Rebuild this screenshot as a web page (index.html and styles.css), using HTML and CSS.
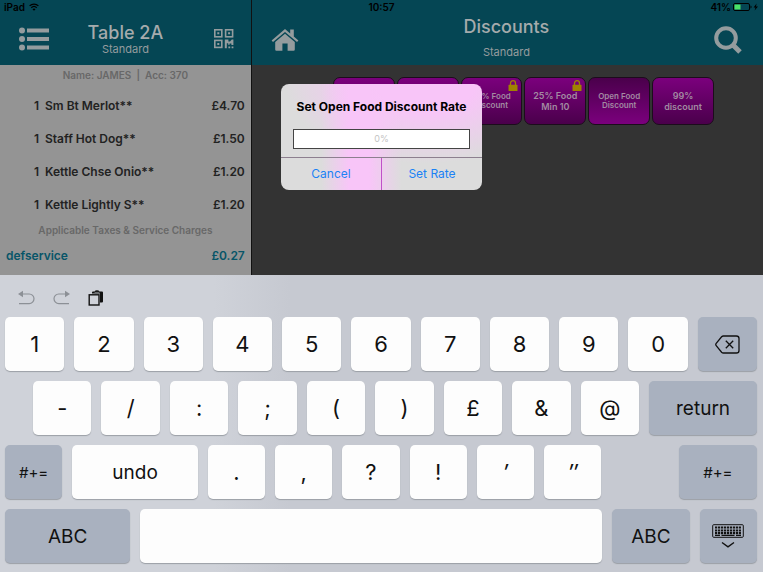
FILE: index.html
```html
<!DOCTYPE html>
<html lang="en">
<head>
  <meta charset="UTF-8">
  <meta name="viewport" content="width=device-width, initial-scale=1">
  <title>Discounts</title>
  <link rel="stylesheet" href="styles.css">
</head>
<body>

<svg class="defs" aria-hidden="true">
  <symbol id="lock" viewBox="0 0 10 11">
    <path d="M2.5 5V3.2a2.5 2.5 0 0 1 5 0V5" fill="none" stroke="currentColor" stroke-width="1.3"/>
    <rect x="0.5" y="4.8" width="9" height="6.2" rx="0.6" fill="currentColor"/>
  </symbol>
</svg>

<div class="app">
  <div class="status">
    <span class="status-left">iPad
      <svg width="10" height="8" viewBox="0 0 10 8" fill="none" stroke="#000" stroke-width="1.3">
        <path d="M0.6 2.9a6.2 6.2 0 0 1 8.8 0M2.3 4.7a3.9 3.9 0 0 1 5.4 0"/>
        <path d="M5 7.8L3.5 6.2a2.2 2.2 0 0 1 3 0z" fill="#000" stroke="none"/>
      </svg>
    </span>
    <span>10:57</span>
    <span class="status-right">41%
      <svg width="26" height="8" viewBox="0 0 26 8">
        <rect x="0.5" y="0.5" width="16" height="7" rx="1.5" fill="none" stroke="#000"/>
        <rect x="1.5" y="1.5" width="6" height="5" fill="#4be265"/>
        <path d="M17.5 2.5a1.6 1.6 0 0 1 0 3z"/>
        <path d="M23.6 0.5L20.6 4.4h1.9L21.6 7.5 25 3.5h-2z"/>
      </svg>
    </span>
  </div>

  <div class="sidebar">
    <div class="header">
      <button class="icon-btn" aria-label="Menu">
        <svg width="30" height="24" viewBox="0 0 30 24" fill="currentColor">
          <circle cx="3" cy="3.5" r="3"/><circle cx="3" cy="12" r="3"/><circle cx="3" cy="20.5" r="3"/>
          <rect x="8" y="1.5" width="22" height="4"/><rect x="8" y="10" width="22" height="4"/><rect x="8" y="18.5" width="22" height="4"/>
        </svg>
      </button>
      <div class="titles">
        <h1>Table 2A</h1>
        <p>Standard</p>
      </div>
      <button class="icon-btn" aria-label="QR code">
        <svg width="20" height="20" viewBox="0 0 20 20">
          <g fill="none" stroke="currentColor" stroke-width="1.6">
            <rect x="0.8" y="0.8" width="7" height="7"/><rect x="11.6" y="0.8" width="7" height="7"/><rect x="0.8" y="11.4" width="7" height="7"/>
          </g>
          <path fill="currentColor" d="M3.3 3.3h2v2h-2zM14.1 3.3h2v2h-2zM3.3 13.9h2v2h-2zM10.8 10.6h3.6v2h1.6l1.8-2h1.6v5.4h-2v-1.6h-1.8v1.4h-1.4v-1.6h-1.4v5h-2zM14.4 17.6h1.8v1.6h-1.8zM17.6 17.6h1.8v1.6h-1.8z"/>
        </svg>
      </button>
    </div>
    <p class="customer">Name: JAMES&nbsp; |&nbsp; Acc: 370</p>
    <table class="bill">
      <tr><td class="qty">1</td><td>Sm Bt Merlot**</td><td class="price">£4.70</td></tr>
      <tr><td class="qty">1</td><td>Staff Hot Dog**</td><td class="price">£1.50</td></tr>
      <tr><td class="qty">1</td><td>Kettle Chse Onio**</td><td class="price">£1.20</td></tr>
      <tr><td class="qty">1</td><td>Kettle Lightly S**</td><td class="price">£1.20</td></tr>
      <tr class="taxes"><td colspan="3">Applicable Taxes &amp; Service Charges</td></tr>
      <tr class="service"><td colspan="2">defservice</td><td class="price">£0.27</td></tr>
    </table>
  </div>

  <div class="main">
    <div class="header">
      <button class="icon-btn" aria-label="Home">
        <svg width="28" height="24" viewBox="0 0 28 24" fill="currentColor">
          <path d="M14 1L0.6 12.4l1.4 1.7L14 3.9l12 10.2 1.4-1.7-4.6-3.9V1.4h-3.6v4z"/>
          <path d="M14 5.8L4.2 14v7.6q0 1.2 1.2 1.2h6V15.6h5.2v7.2h6q1.2 0 1.2-1.2V14z"/>
        </svg>
      </button>
      <div class="titles wide">
        <h1>Discounts</h1>
        <p>Standard</p>
      </div>
      <button class="icon-btn" aria-label="Search">
        <svg width="28" height="28" viewBox="0 0 28 28" fill="none" stroke="currentColor">
          <circle cx="12" cy="12" r="9.8" stroke-width="4"/>
          <path d="M19 19l7 7" stroke-width="5"/>
        </svg>
      </button>
    </div>
    <div class="discounts">
      <button class="discount" aria-label="Discount 1"></button>
      <button class="discount" aria-label="Discount 2"></button>
      <button class="discount" aria-label="Food discount"><span class="clipped">% Food<br>scount</span><svg class="lock"><use href="#lock"/></svg></button>
      <button class="discount large">25% Food Min 10<svg class="lock"><use href="#lock"/></svg></button>
      <button class="discount pressed">Open Food Discount</button>
      <button class="discount large">99% discount</button>
    </div>
  </div>

  <div class="overlay">
    <form class="dialog" role="dialog" aria-labelledby="rate-title">
      <label id="rate-title" for="rate">Set Open Food Discount Rate</label>
      <input id="rate" type="text" placeholder="0%">
      <div class="actions">
        <button type="button">Cancel</button>
        <button type="button">Set Rate</button>
      </div>
    </form>
  </div>
</div>

<div class="keyboard">
  <div class="tools">
    <button aria-label="Undo">
      <svg width="17" height="16" viewBox="0 0 17 16">
        <path d="M4 4h7.2a4.7 4.7 0 0 1 0 9.6H1" fill="none" stroke="#8c9096" stroke-width="1.2"/>
        <path d="M0 4l5-3.2v6.4z" fill="#8c9096"/>
      </svg>
    </button>
    <button aria-label="Redo">
      <svg width="17" height="16" viewBox="0 0 17 16">
        <path d="M13 4H5.8a4.7 4.7 0 0 0 0 9.6H16" fill="none" stroke="#8c9096" stroke-width="1.2"/>
        <path d="M17 4l-5-3.2v6.4z" fill="#8c9096"/>
      </svg>
    </button>
    <button aria-label="Paste">
      <svg width="16" height="16" viewBox="0 0 16 16">
        <path d="M4 3.6V2.4Q4 1.4 5 1.4h1.6Q7 0.2 9 0.2t2.4 1.2H14q1 0 1 1v9.2q0 1-1 1h-2V3.6z" fill="#111"/>
        <path d="M6.6 2.4h4.8" stroke="#8a8d92" stroke-width="0.8"/>
        <rect x="1.2" y="4.8" width="9.8" height="10.2" fill="#cfd2d9" stroke="#111" stroke-width="1.4"/>
      </svg>
    </button>
  </div>

  <div class="keys numbers">
    <button>1</button><button>2</button><button>3</button><button>4</button><button>5</button>
    <button>6</button><button>7</button><button>8</button><button>9</button><button>0</button>
    <button class="dark" aria-label="Delete">
      <svg width="25" height="19" viewBox="0 0 25 19" fill="none" stroke="#111" stroke-width="1.3">
        <path d="M8.4 1H21.4q2.6 0 2.6 2.6v11.8q0 2.6-2.6 2.6H8.4q-1 0-1.8-0.8L1.2 10.6q-0.9-1.1 0-2.2L6.6 1.8Q7.4 1 8.4 1z"/>
        <path d="M10.8 5.7l7.4 7.6M18.2 5.7l-7.4 7.6"/>
      </svg>
    </button>
  </div>
  <div class="keys symbols">
    <button>-</button><button>/</button><button>:</button><button>;</button><button>(</button>
    <button>)</button><button>£</button><button>&amp;</button><button>@</button>
    <button class="dark word">return</button>
  </div>
  <div class="keys punctuation">
    <button class="dark small">#+=</button>
    <button class="word">undo</button>
    <button>.</button><button>,</button><button>?</button><button>!</button>
    <button class="slant">′</button><button class="slant">″</button>
    <button class="dark small last">#+=</button>
  </div>
  <div class="keys bottom">
    <button class="dark word">ABC</button>
    <button aria-label="Space"></button>
    <button class="dark word">ABC</button>
    <button class="dark" aria-label="Hide keyboard">
      <svg width="32" height="26" viewBox="0 0 32 26" fill="none" stroke="#111">
        <rect x="0.7" y="1.7" width="30.6" height="12.6" rx="1"/>
        <path d="M3 4.5h26M3 7.5h26M3 10.2h26" stroke-width="2.2" stroke-dasharray="2.2 0.77"/>
        <path d="M3 12.4h5M9.5 12.4h13M24 12.4h5" stroke-width="1.2"/>
        <path d="M10 19.5l6 4.4 6-4.4" stroke-width="1.4"/>
      </svg>
    </button>
  </div>
</div>

</body>
</html>
```

FILE: styles.css
```css
* { box-sizing: border-box; }
body {
  margin: 0;
  min-height: 100vh;
  display: flex;
  flex-direction: column;
  font-family: Inter, "Liberation Sans", sans-serif;
}
h1, p { margin: 0; font-weight: 500; }
button { margin: 0; padding: 0; border: 0; background: none; color: inherit; font: inherit; }
svg { display: block; }
.defs { display: none; }

.app { position: relative; flex: 1; display: flex; background: #333; }

/* status bar */
.status {
  position: absolute;
  top: 0;
  left: 0;
  right: 0;
  display: grid;
  grid-template-columns: 1fr auto 1fr;
  padding: 0 4px;
  font-size: 10px;
  line-height: 14px;
  font-weight: 600;
}
.status-left, .status-right { display: flex; align-items: center; gap: 4px; }
.status-right { justify-content: flex-end; gap: 2px; }

/* headers */
.header {
  display: flex;
  align-items: center;
  justify-content: space-between;
  height: 65px;
  padding: 14px 21px 0 19px;
  background: #054654;
  color: #949c9e;
}
.titles { text-align: center; font-size: 11px; line-height: 12px; }
.titles h1 { font-size: 18px; line-height: 20px; color: #a5abac; }
.titles p { font-weight: 400; }
.titles.wide { align-self: flex-start; }
.titles.wide h1 { line-height: 26px; }
.titles.wide p { margin-top: 6px; }

/* bill */
.sidebar { width: 33%; background: #949494; border-right: 1px solid #111; }
.sidebar .header { padding: 13px 17px 0 19px; }
.sidebar .titles { flex: 1; padding-right: 12px; }
.customer { margin-bottom: 4px; text-align: center; font-size: 10px; line-height: 20px; font-weight: 600; color: #686868; }
.bill { width: 100%; border-collapse: collapse; font-size: 12px; font-weight: 600; color: #222; }
.bill td { height: 33px; padding: 0; }
.bill .qty { width: 45px; padding-left: 34px; }
.bill .price { padding-right: 6px; text-align: right; }
.bill .taxes td { height: 18px; text-align: center; font-size: 10px; color: #686868; }
.bill .service { color: #075568; }
.bill .service td:first-child { padding-left: 6px; }

/* discounts */
.main { flex: 1; }
.discounts {
  display: grid;
  grid-template-columns: repeat(6, 1fr);
  gap: 2px;
  padding: 12px 49px 0 81px;
}
.discount {
  position: relative;
  height: 48px;
  padding: 0 6px;
  border: 1px solid #1c0c1c;
  border-radius: 7px;
  background: linear-gradient(#7b007d, #4a004b);
  color: #a28aa2;
  font-size: 8px;
  line-height: 9px;
  font-weight: 600;
}
.discount .clipped { display: block; padding-left: 14px; text-align: left; white-space: nowrap; }
.discount.large { font-size: 9px; line-height: 11px; }
.discount.pressed { background: linear-gradient(#4a004b, #7b007d); }
.lock { position: absolute; top: 2px; right: 3px; width: 10px; height: 11px; color: #a08200; }

/* dialog */
.overlay {
  position: absolute;
  inset: 0;
  display: flex;
  align-items: center;
  justify-content: center;
  padding-bottom: 2px;
}
.dialog {
  width: 201px;
  overflow: hidden;
  border-radius: 8px;
  background:
    linear-gradient(90deg, #f8c5f800 20%, #f8c5f8 34%, #f8c5f8 44%, #f8c5f800 60%),
    radial-gradient(ellipse 70% 75% at 72% 0, #f8c5f8 35%, #f8c5f800),
    #dcdcdc;
  text-align: center;
}
.dialog label { display: block; padding: 14px 0 13px; font-size: 12px; line-height: 18px; font-weight: 700; }
.dialog input {
  display: block;
  width: 177px;
  height: 20px;
  margin: 0 auto 8px;
  padding: 0;
  border: 1px solid #444;
  border-radius: 0;
  background: #fff;
  font: 9px Inter, sans-serif;
  text-align: center;
}
.dialog input::placeholder { color: #c4c4c4; }
.actions { display: flex; border-top: 1px solid #8d7f8f; }
.actions button { flex: 1; height: 32px; color: #1b82f5; font-size: 12px; }
.actions button + button { border-left: 1px solid #c050c8; }

/* keyboard */
.keyboard {
  display: flex;
  flex-direction: column;
  gap: 10px;
  padding: 0 6px 9px 5px;
  background: linear-gradient(90deg, #cfd2d9 28%, #c6c9d1 38%);
}
.tools { display: flex; align-items: center; gap: 18px; height: 32px; padding: 14px 13px 0; }
.keys { display: grid; gap: 10px; }
.keys button {
  display: flex;
  align-items: center;
  justify-content: center;
  height: 54px;
  border-radius: 5px;
  background: #fdfdfd;
  box-shadow: 0 1px 1px #9b9fa6;
  color: #111;
  font-size: 22px;
}
.keys .dark { background: #a9b1bf; }
.keys .word { font-size: 19px; }
.keys .small { font-size: 15px; }
.keys .slant { font-style: italic; }
.numbers { grid-template-columns: repeat(11, 1fr); }
.symbols { grid-template-columns: repeat(9, 58fr) 107fr; padding-left: 28px; }
.punctuation { grid-template-columns: 57fr 125fr repeat(7, 57fr) 78fr; }
.punctuation .last { grid-column: 10; }
.bottom { grid-template-columns: 125fr 461fr 78fr 57fr; }
```
